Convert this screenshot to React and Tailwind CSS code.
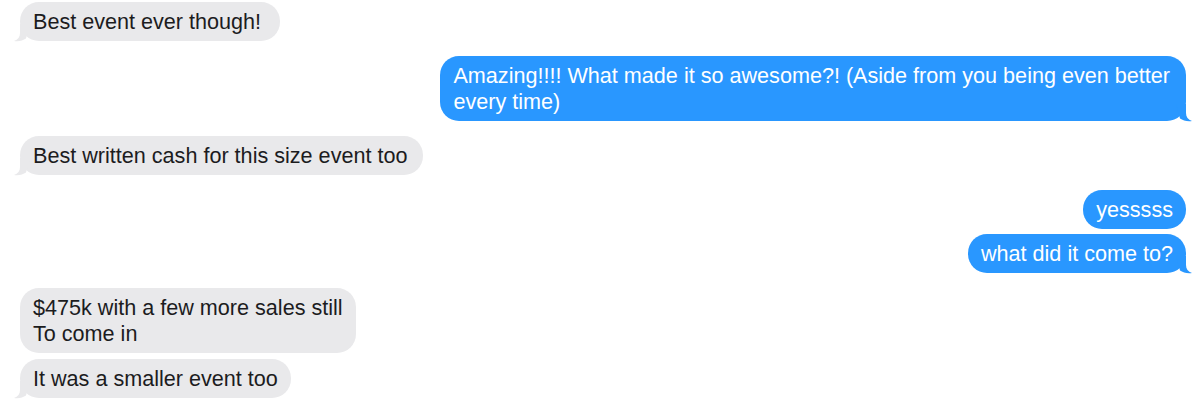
import React from "react";

const GREY = "#e9e9eb";
const BLUE = "#2997ff";

function Tail({ side, color }) {
  const base = "absolute bottom-[-1px] w-[16px] h-[18px]";
  const pos = side === "left" ? "left-[-6px]" : "right-[-6px] scale-x-[-1]";
  return (
    <svg className={`${base} ${pos}`} viewBox="0 0 16 18" aria-hidden="true">
      <path
        d="M6 0 L6 9 C6 13 4 15.5 0 17 C5 17.6 9 16.6 12 14.6 L16 0 Z"
        fill={color}
      />
    </svg>
  );
}

function Bubble({ from, children, tail = true, pad = "px-[13px]" }) {
  const mine = from === "me";
  return (
    <div className={`flex ${mine ? "justify-end" : "justify-start"}`}>
      <div
        className={`relative rounded-[19px] ${pad} py-[6.5px] text-[21.6px] leading-[26px] ${
          mine ? "bg-[#2997ff] text-white" : "bg-[#e9e9eb] text-[#1c1c1e]"
        }`}
      >
        {tail && <Tail side={mine ? "right" : "left"} color={mine ? BLUE : GREY} />}
        <span className="relative whitespace-nowrap">{children}</span>
      </div>
    </div>
  );
}

export default function App() {
  return (
    <div
      className="w-[1200px] h-[402px] bg-white overflow-hidden pl-[20px] pr-[14px] pt-[2px] flex flex-col"
      style={{ fontFamily: '"Liberation Sans", Arial, Helvetica, sans-serif' }}
    >
      <Bubble from="them" pad="pl-[13px] pr-[19px]">Best event ever though!</Bubble>
      <div className="h-[15px]" />
      <Bubble from="me" pad="pl-[13px] pr-[16px]">
        Amazing!!!! What made it so awesome?! (Aside from you being even better
        <br />
        every time)
      </Bubble>
      <div className="h-[15px]" />
      <Bubble from="them" pad="pl-[13px] pr-[16px]">Best written cash for this size event too</Bubble>
      <div className="h-[15px]" />
      <div className="flex flex-col gap-[5px]">
        <Bubble from="me" tail={false}>yesssss</Bubble>
        <Bubble from="me">what did it come to?</Bubble>
      </div>
      <div className="h-[15px]" />
      <div className="flex flex-col gap-[6px]">
        <Bubble from="them" tail={false}>
          $475k with a few more sales still
          <br />
          To come in
        </Bubble>
        <Bubble from="them">It was a smaller event too</Bubble>
      </div>
    </div>
  );
}
